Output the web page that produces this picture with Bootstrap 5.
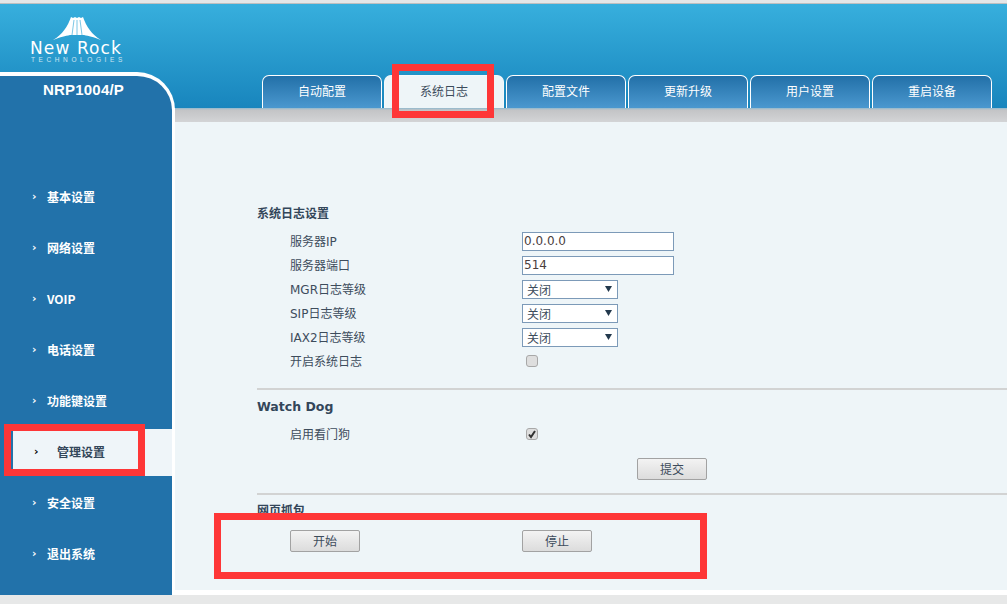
<!DOCTYPE html>
<html lang="zh-CN">
<head>
<meta charset="utf-8">
<title>NRP1004/P</title>
<link rel="stylesheet" href="https://cdn.jsdelivr.net/npm/bootstrap@5.3.0/dist/css/bootstrap.min.css">
<style>
html,body{margin:0;height:604px;overflow:hidden;background:#fff}
body{position:relative;font-family:"DejaVu Sans","Noto Sans CJK SC",sans-serif;font-size:12px;color:#3d4c5c}
.top-line{height:4px;background:linear-gradient(#e4e6e7,#e4e6e7 3px,#bdbfc0 3px)}
.frame{display:grid;grid-template-columns:175px 1fr;grid-template-rows:68px 36px 14px 468px 5px}
.head-bg{grid-column:1/3;grid-row:1/3;background:linear-gradient(#37afdd,#1885bd)}
.brand{grid-column:1;grid-row:1;padding:13px 0 0 30px;color:#fff;width:140px}
.brand svg{display:block;margin-left:23px}
.brand-name{font-family:"DejaVu Sans",sans-serif;font-weight:400;font-size:17px;line-height:14px;letter-spacing:1.1px;margin-top:1px;white-space:nowrap}
.brand-sub{font-family:"Liberation Sans",sans-serif;font-size:6.5px;line-height:7px;letter-spacing:3.6px;margin-top:1px;padding-left:1px;white-space:nowrap;opacity:.75}
.side{grid-column:1;grid-row:2/6;background:#2272aa;border-top:4px solid #fff;border-right:3px solid #fff;border-top-right-radius:38px;color:#fff;z-index:1}
.model{font-family:"Liberation Sans",sans-serif;font-weight:700;font-size:15px;letter-spacing:.2px;line-height:20px;padding:4px 0 0 43px;height:98px}
.side-item{display:flex;align-items:center;height:47px;margin-bottom:4px;padding-left:32px;padding-bottom:2px;color:#fff;text-decoration:none;font-family:"Noto Sans CJK SC",sans-serif;font-weight:700;font-size:12px}
.side-item.on{background:#eff5f9;margin-left:13px;padding-left:21px;color:#33465a}
.chev{width:11px;font-family:"DejaVu Sans",sans-serif;font-weight:700;font-size:11px;line-height:1;margin-right:4px}
.side-item.on .chev{color:#000;margin-right:12px;width:11px}
.tab-row{grid-column:2;grid-row:2;align-self:end;gap:2px;padding-left:87px;flex-wrap:nowrap;border-bottom:0}
.tab-row .nav-link{width:120px;height:33px;line-height:29px;padding:0;text-align:center;color:#fff;font-family:"Noto Sans CJK SC",sans-serif;font-size:12px;background:linear-gradient(#2270a8,#4b98cf);border:1.5px solid #fff;border-bottom:0;border-radius:7px 7px 0 0}
.tab-row .nav-link.active{background:#eef5f8;color:#3d4c5c;border-color:#f4f9fb}
.band{grid-column:2;grid-row:3;background:linear-gradient(#8fb9cf,#c3c4c6 2px,#d3d4d6)}
.pane{grid-column:2;grid-row:4;background:#eef5f8;padding:79px 0 0 82px}
.foot{height:9px;background:#e7e8e8}
.sec-title{font-family:"Noto Sans CJK SC",sans-serif;font-weight:700;font-size:12px;line-height:24px;color:#33465a}
.sec-title.latin{font-family:"DejaVu Sans",sans-serif;font-size:12.5px;margin-top:5px;margin-bottom:3px}
.sec-first{margin-bottom:4px}
.f-row{display:flex;align-items:center;height:24px;padding-left:33px}
.f-row label{width:232px;flex:none;margin:0;padding-top:2px}
.f-text{width:152px;height:19px;border:1px solid #7c9ab8;border-radius:0;padding:0 1px;font-size:12px;font-family:"DejaVu Sans",sans-serif;color:#4a3d3d;background:#fff;min-height:0;line-height:17px;box-shadow:none}
.f-sel{width:96px;height:19px;border:1px solid #7c9ab8;border-radius:0;padding:0 16px 0 4px;font-size:12px;font-family:"Noto Sans CJK SC",sans-serif;color:#3d4c5c;line-height:17px;min-height:0;background:#fff url("data:image/svg+xml,%3Csvg xmlns='http://www.w3.org/2000/svg' width='7' height='6'%3E%3Cpath d='M0 0h7L3.5 6z' fill='%2323394d'/%3E%3C/svg%3E") no-repeat right 5px center;background-size:7px 6px}
.f-chk{width:12px;height:12px;margin:0 0 0 4px;border:1px solid #a8a8a8;border-radius:3px;background-color:#dedede;box-shadow:none}
.f-chk:checked{background-color:#dedede;border-color:#a8a8a8;background-size:10px 10px;background-image:url("data:image/svg+xml,%3Csvg xmlns='http://www.w3.org/2000/svg' viewBox='0 0 10 10'%3E%3Cpath d='M2 5.5 4 8l4-6' fill='none' stroke='%23333' stroke-width='2'/%3E%3C/svg%3E")}
.rule{height:2px;background:#d2d3d3;margin:0;border:0;opacity:1}
.rule-a{margin-top:15px}
.rule-b{margin-top:13px;margin-bottom:3px}
.act-row{display:flex;height:22px}
.act-row.submit{margin-top:12px;padding-left:380px}
.act-row.capture{margin-top:8px;padding-left:33px;gap:162px}
.gbtn{width:70px;height:22px;padding:0;border:1px solid #a2a2a2;border-radius:2px;background:linear-gradient(#f3f3f3,#dcdcdc);color:#3d4c5c;font-family:"Noto Sans CJK SC",sans-serif;font-size:12px;line-height:20px}
.flag{position:absolute;border:7px solid #fe3637;z-index:3;pointer-events:none}
.flag-tab{left:392px;top:64px;width:102px;height:54px}
.flag-menu{left:4px;top:424px;width:141px;height:52px}
.flag-capture{left:214px;top:513px;width:493px;height:66px}
</style>
</head>
<body>
<div class="top-line"></div>
<div class="frame">
  <div class="head-bg"></div>
  <div class="brand">
    <svg width="48" height="23" viewBox="0 0 48 23"><path fill="#fff" d="M0 23C9 18 15 9 18 0L20 1 22 0 24 1 26 0 28 1 30 0C33 9 39 18 48 23 40 20 36 19 31 18L17 18C12 19 8 20 0 23Z"/><path fill="none" stroke="#6cc0e2" stroke-width=".9" d="M21 3 19 18M24 3V18M27 3 29 18"/></svg>
    <div class="brand-name">New Rock</div>
    <div class="brand-sub">TECHNOLOGIES</div>
  </div>
  <ul class="nav tab-row">
    <li class="nav-item"><a class="nav-link" href="#">自动配置</a></li>
    <li class="nav-item"><a class="nav-link active" href="#">系统日志</a></li>
    <li class="nav-item"><a class="nav-link" href="#">配置文件</a></li>
    <li class="nav-item"><a class="nav-link" href="#">更新升级</a></li>
    <li class="nav-item"><a class="nav-link" href="#">用户设置</a></li>
    <li class="nav-item"><a class="nav-link" href="#">重启设备</a></li>
  </ul>
  <aside class="side">
    <div class="model">NRP1004/P</div>
    <a class="side-item" href="#"><span class="chev">›</span>基本设置</a>
    <a class="side-item" href="#"><span class="chev">›</span>网络设置</a>
    <a class="side-item" href="#"><span class="chev">›</span>VOIP</a>
    <a class="side-item" href="#"><span class="chev">›</span>电话设置</a>
    <a class="side-item" href="#"><span class="chev">›</span>功能键设置</a>
    <a class="side-item on" href="#"><span class="chev">›</span>管理设置</a>
    <a class="side-item" href="#"><span class="chev">›</span>安全设置</a>
    <a class="side-item" href="#"><span class="chev">›</span>退出系统</a>
  </aside>
  <div class="band"></div>
  <main class="pane">
    <div class="sec-title sec-first">系统日志设置</div>
    <div class="f-row"><label>服务器IP</label><input class="form-control f-text" value="0.0.0.0"></div>
    <div class="f-row"><label>服务器端口</label><input class="form-control f-text" value="514"></div>
    <div class="f-row"><label>MGR日志等级</label><select class="form-select f-sel"><option>关闭</option></select></div>
    <div class="f-row"><label>SIP日志等级</label><select class="form-select f-sel"><option>关闭</option></select></div>
    <div class="f-row"><label>IAX2日志等级</label><select class="form-select f-sel"><option>关闭</option></select></div>
    <div class="f-row"><label>开启系统日志</label><input class="form-check-input f-chk" type="checkbox"></div>
    <hr class="rule rule-a">
    <div class="sec-title latin">Watch Dog</div>
    <div class="f-row"><label>启用看门狗</label><input class="form-check-input f-chk" type="checkbox" checked></div>
    <div class="act-row submit"><button class="btn gbtn" type="button">提交</button></div>
    <hr class="rule rule-b">
    <div class="sec-title">网页抓包</div>
    <div class="act-row capture"><button class="btn gbtn" type="button">开始</button><button class="btn gbtn" type="button">停止</button></div>
  </main>
</div>
<div class="foot"></div>
<div class="flag flag-tab"></div>
<div class="flag flag-menu"></div>
<div class="flag flag-capture"></div>
<script src="https://cdn.jsdelivr.net/npm/bootstrap@5.3.0/dist/js/bootstrap.bundle.min.js"></script>
</body>
</html>
